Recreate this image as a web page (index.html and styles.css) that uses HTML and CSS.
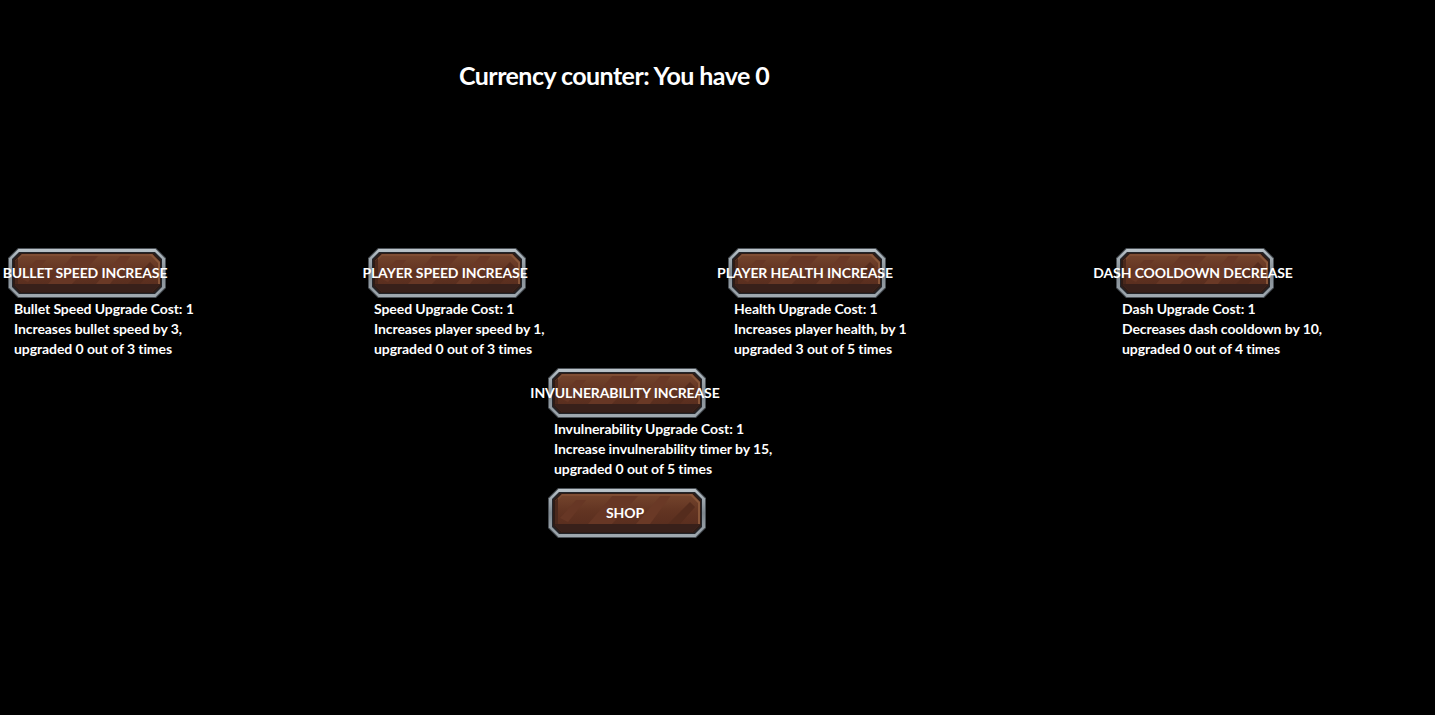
FILE: index.html
```html
<!DOCTYPE html>
<html lang="en">
<head>
    <meta charset="UTF-8">
    <title>Upgrades</title>
    <link rel="stylesheet" href="styles.css">
</head>
<body>
    <svg class="defs" width="0" height="0">
        <defs>
            <linearGradient id="metal" x1="0" y1="0" x2="0" y2="1">
                <stop offset="0" stop-color="#bcc5cb"/>
                <stop offset="0.15" stop-color="#a7b0b7"/>
                <stop offset="0.5" stop-color="#7f888f"/>
                <stop offset="1" stop-color="#a0a9b0"/>
            </linearGradient>
            <linearGradient id="wood" x1="0" y1="0" x2="0" y2="1">
                <stop offset="0" stop-color="#75452d"/>
                <stop offset="0.45" stop-color="#623422"/>
                <stop offset="1" stop-color="#552b1d"/>
            </linearGradient>
        </defs>
        <symbol id="btn" viewBox="0 0 158 50">
            <polygon points="10,0 148,0 158,10 158,40 148,50 10,50 0,40 0,10" fill="#4a5056"/>
            <polygon points="10.500,1 147.500,1 157,10.500 157,39.500 147.500,49 10.500,49 1,39.500 1,10.500" fill="url(#metal)"/>
            <polygon points="11,4 147,4 154,11 154,39 147,46 11,46 4,39 4,11" fill="#23252a"/>
            <polygon points="12,5 146,5 153,12 153,38 146,45 12,45 5,38 5,12" fill="#2f1c16"/>
            <polygon points="14,6 144,6 152,14 152,36 144,44 14,44 7,37 7,13" fill="url(#wood)"/>
            <polygon points="40,36 66,6 92,6 64,36" fill="#673725"/>
            <polygon points="88,36 114,6 124,6 102,36" fill="#6a3926"/>
            <polygon points="12,30 28,12 38,12 20,34" fill="#673725"/>
            <polygon points="120,36 142,14 147,19 132,36" fill="#552c1d"/>
            <polygon points="14,6 144,6 146,8 14,8 7,15 7,13" fill="#7f4d33"/>
            <polygon points="144,6 152,14 152,36 150,36 150,15 141,6" fill="#875538"/>
            <polygon points="7,13 10,10 10,37 7,37" fill="#4a281c"/>
            <polygon points="7,37 7,36 152,36 144,44 14,44" fill="#38201a"/>
        </symbol>
    </svg>

    <h1 class="counter">Currency counter: You have 0</h1>

    <div class="row row-top">
        <div class="upgrade col-a">
            <div class="btn"><svg class="btn-bg"><use href="#btn"/></svg><span class="btn-label">BULLET SPEED INCREASE</span></div>
            <p class="desc">Bullet Speed Upgrade Cost: 1<br>Increases bullet speed by 3,<br>upgraded 0 out of 3 times</p>
        </div>
        <div class="upgrade col-b">
            <div class="btn"><svg class="btn-bg"><use href="#btn"/></svg><span class="btn-label">PLAYER SPEED INCREASE</span></div>
            <p class="desc">Speed Upgrade Cost: 1<br>Increases player speed by 1,<br>upgraded 0 out of 3 times</p>
        </div>
        <div class="upgrade col-c">
            <div class="btn"><svg class="btn-bg"><use href="#btn"/></svg><span class="btn-label">PLAYER HEALTH INCREASE</span></div>
            <p class="desc">Health Upgrade Cost: 1<br>Increases player health, by 1<br>upgraded 3 out of 5 times</p>
        </div>
        <div class="upgrade col-d">
            <div class="btn"><svg class="btn-bg"><use href="#btn"/></svg><span class="btn-label">DASH COOLDOWN DECREASE</span></div>
            <p class="desc">Dash Upgrade Cost: 1<br>Decreases dash cooldown by 10,<br>upgraded 0 out of 4 times</p>
        </div>
    </div>

    <div class="center">
        <div class="btn"><svg class="btn-bg"><use href="#btn"/></svg><span class="btn-label">INVULNERABILITY INCREASE</span></div>
        <p class="desc">Invulnerability Upgrade Cost: 1<br>Increase invulnerability timer by 15,<br>upgraded 0 out of 5 times</p>
        <div class="btn"><svg class="btn-bg"><use href="#btn"/></svg><span class="btn-label">SHOP</span></div>
    </div>
</body>
</html>
```

FILE: styles.css
```css
html, body {
    margin: 0;
    height: 715px;
    overflow: hidden;
    background-color: #000;
}
body {
    font-family: "Lato", sans-serif;
    font-weight: 700;
    color: #fff;
}
.defs {
    display: block;
    height: 0;
}
.counter {
    margin: 0;
    padding: 59px 0 0 459px;
    height: 248px;
    box-sizing: border-box;
    font-size: 25px;
    line-height: 33px;
    font-weight: 700;
    letter-spacing: -0.55px;
    white-space: nowrap;
}
.row {
    display: flex;
    height: 120px;
}
.upgrade {
    width: 158px;
}
.col-a { margin-left: 8px; }
.col-b { margin-left: 202px; }
.col-c { margin-left: 202px; }
.col-d { margin-left: 230px; }
.center {
    margin-left: 548px;
    width: 158px;
}
.btn {
    position: relative;
    display: flex;
    justify-content: center;
    align-items: center;
    width: 158px;
    height: 50px;
}
.btn-bg {
    position: absolute;
    inset: 0;
    width: 158px;
    height: 50px;
}
.btn-label {
    position: relative;
    top: -1px;
    font-size: 14px;
    letter-spacing: -0.1px;
    white-space: nowrap;
    margin-left: -4px;
}
.desc {
    margin: 0;
    padding: 1px 0 0 6px;
    height: 69px;
    font-size: 14px;
    line-height: 20px;
    letter-spacing: -0.08px;
    white-space: nowrap;
}
```
